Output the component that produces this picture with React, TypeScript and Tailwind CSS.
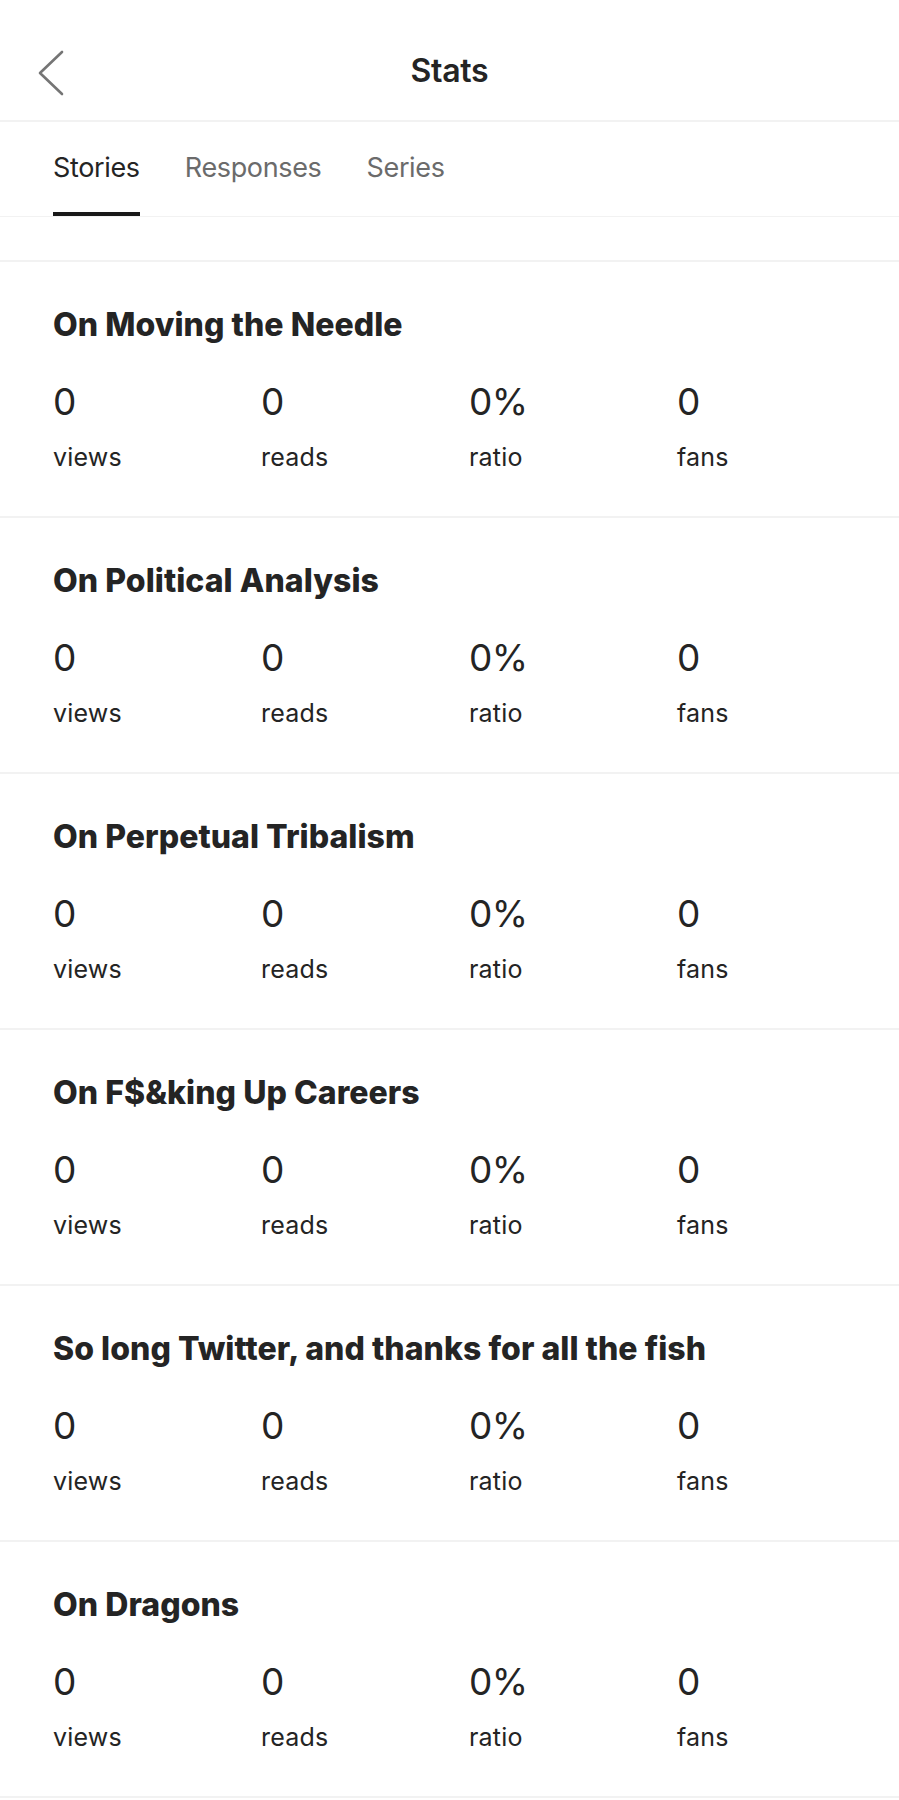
import React from "react";

const stories = [
  "On Moving the Needle",
  "On Political Analysis",
  "On Perpetual Tribalism",
  "On F$&king Up Careers",
  "So long Twitter, and thanks for all the fish",
  "On Dragons",
];

const stats = [
  { v: "0", l: "views" },
  { v: "0", l: "reads" },
  { v: "0%", l: "ratio" },
  { v: "0", l: "fans" },
];

export default function App() {
  return (
    <div className="w-[899px] bg-white text-[#242424] font-['Inter','Liberation_Sans',sans-serif]">
      <header className="relative h-[122px] border-b-2 border-[#f2f2f2] pt-[51px]">
        <svg
          className="absolute left-[37px] top-[50px]"
          width="28"
          height="46"
          viewBox="0 0 28 46"
          fill="none"
        >
          <path d="M25 2 L3 23 L25 44" stroke="#757575" strokeWidth="2.6" strokeLinecap="round" strokeLinejoin="round" />
        </svg>
        <h1 className="text-center text-[32px] leading-[40px] font-semibold tracking-[-0.3px]">Stats</h1>
      </header>
      <nav className="flex h-[95px] gap-[45px] border-b border-[#f2f2f2] pl-[53px]">
        {["Stories", "Responses", "Series"].map((t, i) => (
          <div key={t} className="flex flex-col">
            <span
              className={`pt-[30px] pb-[28px] text-[27px] leading-[32px] tracking-[-0.35px] ${
                i === 0 ? "text-[#242424]" : "text-[#6b6b6b]"
              }`}
            >
              {t}
            </span>
            {i === 0 && <div className="h-[4px] bg-[#191919]" />}
          </div>
        ))}
      </nav>
      <div className="h-[45px] border-b-2 border-[#f2f2f2]" />
      {stories.map((s) => (
        <section key={s} className="border-b-2 border-[#f2f2f2] pl-[53px] pt-[43px] pb-[43px]">
          <h2 className="text-[32px] leading-[40px] font-extrabold tracking-[0.05px]">{s}</h2>
          <div className="mt-[35px] grid grid-cols-[repeat(4,208px)]">
            {stats.map((st) => (
              <div key={st.l} className="flex flex-col">
                <span className="text-[37px] leading-[44px] font-normal tracking-[-0.6px]">{st.v}</span>
                <span className="mt-[17px] text-[25px] leading-[32px] tracking-[0.2px]">{st.l}</span>
              </div>
            ))}
          </div>
        </section>
      ))}
    </div>
  );
}
